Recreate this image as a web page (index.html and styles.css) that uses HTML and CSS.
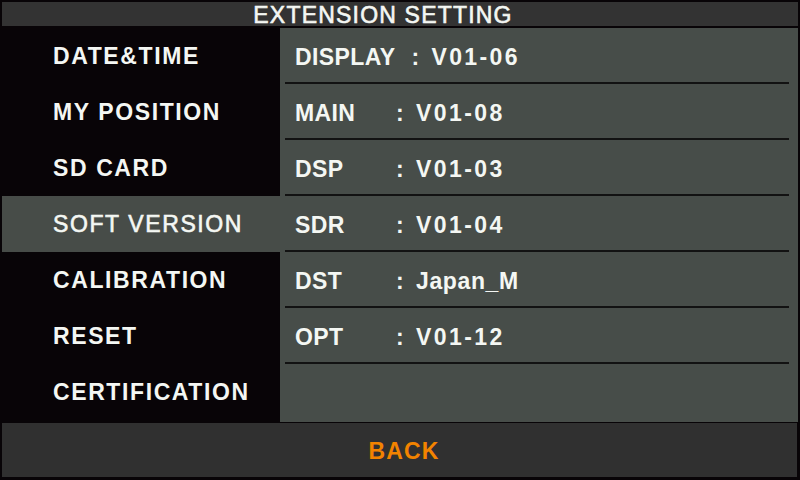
FILE: index.html
```html
<!DOCTYPE html>
<html lang="en">
<head>
  <meta charset="UTF-8" />
  <meta name="viewport" content="width=device-width, initial-scale=1.0" />
  <title>Extension Setting</title>
  <link rel="stylesheet" href="styles.css">
</head>
<body>
  <div class="screen">
    <div class="title-bar">EXTENSION SETTING</div>

    <div class="main">
      <!-- left menu -->
      <ul class="menu">
        <li>DATE&amp;TIME</li>
        <li>MY POSITION</li>
        <li>SD CARD</li>
        <li class="active">SOFT VERSION</li>
        <li>CALIBRATION</li>
        <li>RESET</li>
        <li>CERTIFICATION</li>
      </ul>

      <!-- version list -->
      <div class="info">
        <div class="row"><span class="label">DISPLAY</span><span class="sep">:</span><span class="value">V01-06</span></div>
        <div class="row"><span class="label">MAIN</span><span class="sep">:</span><span class="value">V01-08</span></div>
        <div class="row"><span class="label">DSP</span><span class="sep">:</span><span class="value">V01-03</span></div>
        <div class="row"><span class="label">SDR</span><span class="sep">:</span><span class="value">V01-04</span></div>
        <div class="row"><span class="label">DST</span><span class="sep">:</span><span class="value text">Japan_M</span></div>
        <div class="row"><span class="label">OPT</span><span class="sep">:</span><span class="value">V01-12</span></div>
      </div>
    </div>

    <div class="back-bar">BACK</div>
  </div>
</body>
</html>
```

FILE: styles.css
```css
/* display unit menu screen */
body {
  margin: 0;
  background: #080407;
  font-family: 'Liberation Sans', Arial, sans-serif;
  color: #f4f7f3;
}
.screen {
  width: 800px;
  height: 480px;
  padding-top: 2px;
  box-sizing: border-box;
  display: flex;
  flex-direction: column;
}
.title-bar {
  height: 24px;
  margin: 0 2px;
  padding-right: 34px;
  background: #333333;
  font-size: 23px;
  line-height: 26px;
  letter-spacing: 1.2px;
  text-align: center;
  -webkit-text-stroke: 0.6px #f4f7f3;
}
.main {
  display: flex;
  height: 394px;
  margin-top: 2px;
}
.menu {
  width: 278px;
  margin: 0;
  padding: 0 0 0 2px;
  list-style: none;
}
.menu li {
  height: 56px;
  padding-left: 51px;
  font-size: 23px;
  font-weight: bold;
  line-height: 56px;
  letter-spacing: 1.6px;
}
.menu li.active {
  background: #474c48;
  font-weight: normal;
  letter-spacing: 1.6px;
  -webkit-text-stroke: 0.6px #f4f7f3;
}
.info {
  flex: 1;
  margin-right: 2px;
  background: #474d49;
}
.row {
  height: 54px;
  margin: 0 9px 0 5px;
  padding-left: 10px;
  border-bottom: 2px solid #121212;
  font-size: 23px;
  font-weight: bold;
  line-height: 58px;
  letter-spacing: 0.4px;
}
.label {
  display: inline-block;
  min-width: 85px;
  padding-right: 16px;
}
.sep {
  margin-right: 12px;
}
.value {
  letter-spacing: 2.4px;
}
.value.text {
  letter-spacing: 0.6px;
}
.back-bar {
  height: 54px;
  margin: 1px 3px 0 2px;
  padding-left: 9px;
  background: #303030;
  color: #f28300;
  font-size: 23px;
  font-weight: bold;
  line-height: 56px;
  letter-spacing: 1.2px;
  text-align: center;
}
```
